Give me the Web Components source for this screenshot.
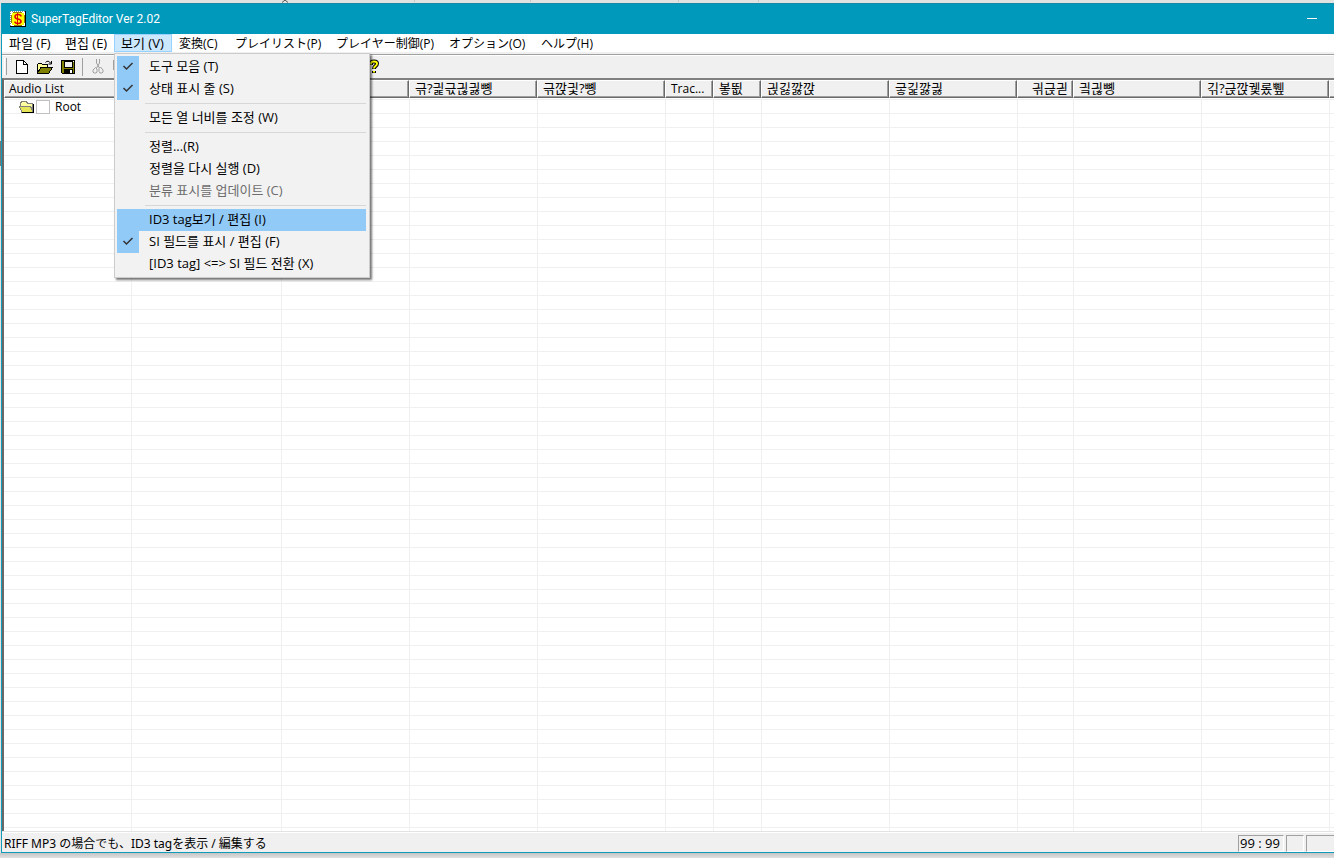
<!DOCTYPE html>
<html lang="ko"><head><meta charset="utf-8"><title>SuperTagEditor Ver 2.02</title>
<style>
html,body{margin:0;height:100%}
body{font:12px/16px "Open Sans","Noto Sans CJK KR","Noto Sans CJK JP",sans-serif;color:#000;background:#e2e2e2;overflow:hidden}
</style></head><body>
<editor-window>
  <title-bar slot="title">SuperTagEditor Ver 2.02</title-bar>
  <menu-bar slot="menu"></menu-bar>
  <tool-bar slot="tools"></tool-bar>
  <audio-list slot="list"></audio-list>
  <status-bar slot="status">RIFF MP3 の場合でも、ID3 tagを表示 / 編集する</status-bar>
</editor-window>
<script>
const define=(name,html,setup)=>customElements.define(name,class extends HTMLElement{
  constructor(){super();this.attachShadow({mode:'open'}).innerHTML=html;if(setup)setup(this.shadowRoot)}
});

define('editor-window',`<style>
:host{display:flex;flex-direction:column;height:100vh;box-sizing:border-box;padding:0 0 5px 1px;
 background:linear-gradient(#777,#777) 0 141px/1px 25px no-repeat,linear-gradient(to top,#e0e0e0,#c4c4c4) bottom/100% 5px no-repeat,#e2e2e2}
.desk{flex:none;height:3px;display:flex}
.desk svg{display:block;margin-left:279px}
.frame{flex:1;min-height:0;display:flex;flex-direction:column;border-left:1px solid #0f9cba;border-bottom:1px solid #0f9cba;background:#f0f0f0}
.list{flex:1;min-height:0;display:flex}
</style>
<div class="desk"><svg width="480" height="3"><path d="M2 2.500L5 0L8 2.500" stroke="#555" fill="none"/><path d="M134.500 0v2M250.500 0v2M398.500 0v2M478.500 0v2" stroke="#c8c8c8"/></svg></div>
<div class="frame"><slot name="title"></slot><slot name="menu"></slot><slot name="tools"></slot><div class="list"><slot name="list"></slot></div><slot name="status"></slot></div>`);

define('title-bar',`<style>
:host{display:flex;align-items:center;height:31px;flex:none;background:#0099bc;color:#fff;font-family:Roboto,"Noto Sans CJK KR",sans-serif;border-top:1px solid #158aa5;box-sizing:border-box;padding-bottom:1px}
.icon{display:block;margin:0 5px 0 8px}
.name{flex:1}
button{border:0;background:none;padding:0;width:44px;height:28px;display:grid;place-items:center}
</style>
<svg class="icon" width="16" height="16" shape-rendering="crispEdges"><path fill="#fff" d="M0 0h16v16H0z"/><path d="M0 .5h16M.5 0v16" stroke="#888" stroke-dasharray="1 1"/><path d="M15.500 0v16M0 15.500h16" stroke="#000"/><path d="M3 1h9v1h2v2h1v8h-1v2h-2v1H4v-1H2v-2H1V4h1V2h1z" fill="#ff0"/><path d="M3 1.500h9M1.500 4v8M4 14.500h8M14.500 4v8" stroke="#997d00"/><path shape-rendering="auto" d="M11 5.500Q11 3.500 8 3.500T5 5.700Q5 7.500 8 8T11 10.500Q11 12.500 8 12.500T5 10.500" fill="none" stroke="#e00000" stroke-width="1.600"/><path d="M7.500 2v12" stroke="#e00000"/></svg>
<span class="name"><slot></slot></span><button aria-label="최소화"><svg width="10" height="1"><path fill="#fff" d="M0 0h10v1H0z"/></svg></button>`);

define('menu-bar',`<style>
:host{display:block;flex:none;position:relative;z-index:2;background:#fff}
nav{display:grid;grid-template-columns:56px 56px 58px 56px 101px 113px 92px 70px;height:18px;border-bottom:2px solid #f0f0f0}
button{font:inherit;text-align:left;color:#000;border:1px solid transparent;background:none;padding:0 0 0 6px;white-space:nowrap;line-height:16px}
button.ko{font-size:13px}
button[lang=ja]{padding-top:2px;line-height:14px}
button[aria-expanded=true]{background:#cce8ff;border-color:#99d1ff}
drop-menu{position:absolute;left:112px;top:19px}
</style>
<nav><button class="ko">파일 (F)</button><button class="ko">편집 (E)</button><button class="ko" aria-expanded="true">보기 (V)</button><button lang="ja">変換(C)</button><button lang="ja">プレイリスト(P)</button><button lang="ja">プレイヤー制御(P)</button><button lang="ja">オプション(O)</button><button lang="ja">ヘルプ(H)</button></nav>
<drop-menu>
<menu-entry checked>도구 모음 (T)</menu-entry><menu-entry checked>상태 표시 줄 (S)</menu-entry><menu-line></menu-line>
<menu-entry>모든 열 너비를 조정 (W)</menu-entry><menu-line></menu-line>
<menu-entry>정렬...(R)</menu-entry><menu-entry>정렬을 다시 실행 (D)</menu-entry><menu-entry disabled>분류 표시를 업데이트 (C)</menu-entry><menu-line></menu-line>
<menu-entry active>ID3 tag보기 / 편집 (I)</menu-entry><menu-entry checked>SI 필드를 표시 / 편집 (F)</menu-entry><menu-entry>[ID3 tag] &lt;=&gt; SI 필드 전환 (X)</menu-entry>
</drop-menu>`);

define('drop-menu',`<style>:host{display:block;box-sizing:border-box;width:256px;background:#f2f2f2;border:1px solid #ccc;padding:2px;box-shadow:2px 2px 2px #0008}</style><slot></slot>`);
define('menu-line',`<style>:host{display:block;height:7px;box-sizing:border-box;padding:3px 1px 0 28px}div{height:1px;background:#d7d7d7}</style><div></div>`);
define('menu-entry',`<style>
:host{display:block;height:22px;margin-right:1px}
button{font:inherit;font-size:13px;display:flex;width:100%;height:22px;border:0;padding:0;background:none;color:#000;text-align:left;white-space:nowrap}
.mark{width:22px;height:22px;box-sizing:border-box;padding-bottom:2px;margin-right:10px;display:grid;place-items:center}
.label{line-height:20px}
svg{visibility:hidden}
:host([checked]) svg{visibility:visible}
:host([checked]) .mark,:host([active]) button{background:#91c9f7}
:host([disabled]) button{color:#6d6d6d}
</style><button><span class="mark"><svg width="12" height="10"><path d="M1.500 5L4.500 8L10.500 2" fill="none" stroke="#333" stroke-width="1.500"/></svg></span><span class="label"><slot></slot></span></button>`);

define('tool-bar',`<style>
:host{display:flex;align-items:center;flex:none;height:24px;box-sizing:border-box;background:#f0f0f0;border-top:1px solid #a0a0a0;padding:1px 0 1px 2px;box-shadow:inset 0 1px #fff}
.grip{width:1px;height:17px;border-left:1px solid #fff;border-right:1px solid #a0a0a0;margin-right:3px}
.sep{width:1px;height:18px;background:#a0a0a0;margin:0 3px 0 3px}
button{width:23px;height:21px;border:0;padding:0;background:none;display:grid;place-items:center;flex:none}
.help{margin-left:230px}
svg{display:block}
</style>
<span class="grip"></span>
<button aria-label="새로 만들기"><svg width="12" height="14" shape-rendering="crispEdges"><path d="M.5.5h7l4 4v9H.5z" fill="#fff" stroke="#000"/><path d="M7.500.5v4h4" fill="none" stroke="#000"/></svg></button>
<button aria-label="열기"><svg width="16" height="14" shape-rendering="crispEdges"><path d="M.5 12.500v-8l1-1h3l1 1h5v3" fill="#ffff99" stroke="#000"/><path d="M.5 13L4 7.500h11.500L11.500 13.500H.5z" fill="#808000" stroke="#000"/><path shape-rendering="auto" d="M8.500 2.500Q11-.5 14 3.500M14.500 1v3h-3" fill="none" stroke="#000"/></svg></button>
<button aria-label="저장"><svg width="14" height="14" shape-rendering="crispEdges"><path d="M.5.5h13v13h-12l-1-1z" fill="#808000" stroke="#000"/><path d="M3 1h8v6H3z" fill="#f0f0f0" stroke="#000"/><path d="M3 9h9v5H3z"/><path d="M9 10h2v3H9zM12 1h1v1h-1z" fill="#fff"/></svg></button>
<span class="sep"></span>
<button aria-label="잘라내기" disabled><svg width="12" height="15"><path d="M4.500 0v4l3 5M7.500 0v4l-3 5" fill="none" stroke="#a0a0a0"/><path d="M3.500 8.500L5 10v3l-1 1H2L1 13v-2zM8.500 8L7 9.500v3L8 14h2l1-1v-2z" fill="none" stroke="#a0a0a0"/></svg></button>
<button aria-label="복사" disabled><svg width="15" height="14" shape-rendering="crispEdges"><path d="M.5.500h6l2 2v7h-8zM6.500 4.500h5l3 3v6h-8z" fill="#f0f0f0" stroke="#a0a0a0"/></svg></button>
<button class="help" aria-label="도움말"><svg width="12" height="16"><path d="M3 6V4.500Q3 2.500 6 2.500T9 4.500Q9 6 7.500 7T6 10M6 12v2" fill="none" stroke="#000" stroke-width="4"/><path d="M3 5.500V4.500Q3 2.500 6 2.500T9 4.500Q9 6 7.500 7T6 9.500M6 12v1.500" fill="none" stroke="#ff0" stroke-width="2"/></svg></button>`);

define('audio-list',`<style>
:host{display:block;flex:1;min-width:0;overflow:hidden;background:#fff;border:solid;border-width:2px 0 0 2px;border-color:#808080 #808080 #808080 #696969}
table{table-layout:fixed;border-collapse:separate;border-spacing:0;width:1500px}
th{padding:0 0 1px;border-bottom:1px solid #f0f0f0;font-weight:400;text-align:left}
th div{height:18px;box-sizing:border-box;background:#f0f0f0;border:1px solid #fff;border-right-color:#696969;border-bottom-color:#696969;box-shadow:inset -1px -1px #a0a0a0;padding:0 4px 0 5px;line-height:15px;white-space:nowrap;overflow:hidden}
th.ko div{font-size:13px}
th.right{text-align:right}
td{height:13px;padding:0;border-left:1px solid #f0f0f0;border-bottom:1px solid #f0f0f0;line-height:13px}
th:first-child div{padding-left:4px}
td:first-child{border-left:0}
label{display:flex;align-items:center;height:13px;padding-left:15px;line-height:15px}
input{appearance:none;width:14px;height:14px;margin:0 5px 0 1px;border:1px solid #c0c0c0;background:#fff;box-sizing:border-box}
</style><table><colgroup></colgroup><thead><tr></tr></thead><tbody></tbody></table>`,root=>{
  const columns=[[127,'Audio List'],[150,''],[128,''],[128,'\uadfa?\uae21\uadfb\uae1a\uae23\ubf39'],[128,'\uadfa\uae51\uae2b?\ubf39'],[48,'Trac...'],[48,'\ubd0f\ub702'],[128,'\uae19\uae3f\uae5b\uae51'],[128,'\uae13\uae3d\uae5b\uae23'],[56,'\uae16\uadfd\uae1b','right'],[128,'\uae2c\uae1a\ubf39'],[128,'\uae32?\uadfd\uae51\uadbb\ub870\uc01e'],[175,'']];
  root.querySelector('colgroup').innerHTML=columns.map(([w])=>`<col style="width:${w}px">`).join('');
  root.querySelector('thead tr').innerHTML=columns.map(([,t,c])=>`<th scope="col" class="${c||''} ${/[가-힣]/.test(t)?'ko':''}"><div>${t}</div></th>`).join('');
  const rest='<td></td>'.repeat(columns.length-1);
  root.querySelector('tbody').innerHTML=`<tr><td><label><svg width="16" height="12" shape-rendering="crispEdges"><path d="M1.500 9V2.500l1-2h5l1 2h5V11" fill="#ffffa0" stroke="#808080"/><path d="M3 11.500L.5 5.500h11l3 6z" fill="#e6e65a" stroke="#808080"/><path d="M14.500 3v9M3 11.500h12" stroke="#000"/></svg><input type="checkbox">Root</label></td>${rest}</tr>`+`<tr><td></td>${rest}</tr>`.repeat(90);
});

define('status-bar',`<style>
:host{display:flex;flex:none;height:21px;box-sizing:border-box;background:#f0f0f0;border-top:1px solid #e3e3e3;box-shadow:inset 0 1px #fff;padding-top:3px}
.message{flex:1;padding-left:2px;line-height:17px;font-family:"Noto Sans","Noto Sans CJK JP",sans-serif}
.panel{box-sizing:border-box;height:17px;border:1px solid #a0a0a0;border-right-color:#fff;border-bottom-color:#fff;margin-right:2px;line-height:15px;padding-left:1px;font-size:13px}
.time{width:46px}.small{width:18px}.last{width:28px;margin:0;border-right:0}
</style><span class="message" lang="ja"><slot></slot></span><span class="panel time">99 : 99</span><span class="panel small"></span><span class="panel last"></span>`);
</script></body></html>
